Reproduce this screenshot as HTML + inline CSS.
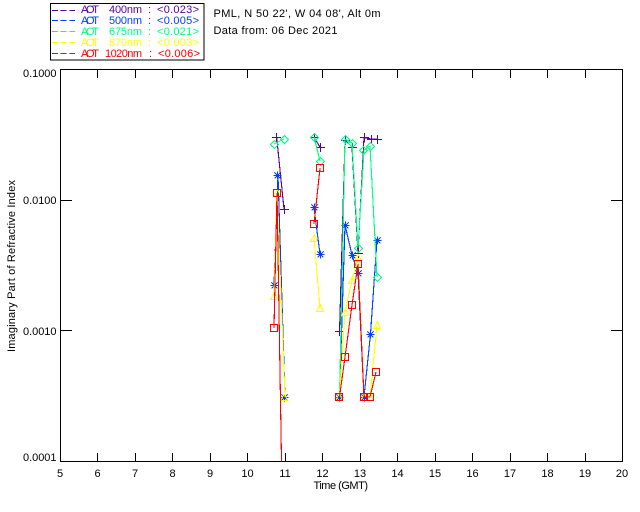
<!DOCTYPE html>
<html><head><meta charset="utf-8"><style>
html,body{margin:0;padding:0;background:#fff}
svg{display:block}
text{font-family:"Liberation Sans",sans-serif;font-size:11px;fill:#000}
.l{fill:none;stroke-width:1.1;shape-rendering:crispEdges}
.m{fill:none;stroke-width:1;shape-rendering:crispEdges}
.m use{shape-rendering:crispEdges}
.a{stroke:#000;stroke-width:1;fill:none;shape-rendering:crispEdges}
</style></head><body>
<svg width="640" height="512" viewBox="0 0 640 512" xmlns="http://www.w3.org/2000/svg">
<defs>
<path id="plus" d="M-4.5 0H4.5M0 -4.5V4.5" shape-rendering="crispEdges"/>
<path id="star" d="M-4 0H4M0 -4V4M-3 -3L3 3M-3 3L3 -3" shape-rendering="crispEdges"/>
<path id="dia" d="M0 -4L4 0L0 4L-4 0Z" shape-rendering="crispEdges"/>
<path id="tri" d="M0 -4L3 3H-4Z" shape-rendering="crispEdges"/>
<path id="sq" d="M-4 -4H3V3H-4Z" shape-rendering="crispEdges"/>
</defs>

<!-- legend -->
<rect class="a" x="50.5" y="3.5" width="153.5" height="56.5"/>
<g stroke-dasharray="6 2.7" class="l">
<path stroke="#5a00a0" d="M52 10.5H75"/>
<path stroke="#0040ff" d="M52 20.5H75"/>
<path stroke="#00ff80" d="M52 31.5H75"/>
<path stroke="#ffff00" d="M52 42.5H75"/>
<path stroke="#ff0000" d="M52 53.5H75"/>
</g>
<g><text x="81" y="13" textLength="18" style="fill:#5a00a0">AOT</text><text x="109" y="13" textLength="33" style="fill:#5a00a0">400nm</text><text x="148" y="13" style="fill:#5a00a0">:</text><text x="157" y="13" textLength="42" style="fill:#5a00a0">&lt;0.023&gt;</text></g>
<g><text x="81" y="24" textLength="18" style="fill:#0040ff">AOT</text><text x="109" y="24" textLength="33" style="fill:#0040ff">500nm</text><text x="148" y="24" style="fill:#0040ff">:</text><text x="157" y="24" textLength="42" style="fill:#0040ff">&lt;0.005&gt;</text></g>
<g><text x="81" y="35" textLength="18" style="fill:#00ff80">AOT</text><text x="109" y="35" textLength="33" style="fill:#00ff80">675nm</text><text x="148" y="35" style="fill:#00ff80">:</text><text x="157" y="35" textLength="42" style="fill:#00ff80">&lt;0.021&gt;</text></g>
<g><text x="81" y="46" textLength="18" style="fill:#ffff00">AOT</text><text x="109" y="46" textLength="33" style="fill:#ffff00">870nm</text><text x="148" y="46" style="fill:#ffff00">:</text><text x="157" y="46" textLength="42" style="fill:#ffff00">&lt;0.003&gt;</text></g>
<g><text x="81" y="57" textLength="18" style="fill:#ff0000">AOT</text><text x="105" y="57" textLength="37" style="fill:#ff0000">1020nm</text><text x="149" y="57" style="fill:#ff0000">:</text><text x="158" y="57" textLength="42" style="fill:#ff0000">&lt;0.006&gt;</text></g>

<text x="213.5" y="17" textLength="167">PML, N 50 22', W 04 08', Alt 0m</text>
<text x="213.5" y="34" textLength="124">Data from: 06 Dec 2021</text>

<!-- axes -->
<rect class="a" x="60.5" y="69.5" width="562" height="392"/>
<path class="a" d="M97.5 70V78M135.5 70V78M172.5 70V78M210.5 70V78M247.5 70V78M285.5 70V78M322.5 70V78M360.5 70V78M397.5 70V78M435.5 70V78M472.5 70V78M510.5 70V78M547.5 70V78M585.5 70V78
M97.5 461V453M135.5 461V453M172.5 461V453M210.5 461V453M247.5 461V453M285.5 461V453M322.5 461V453M360.5 461V453M397.5 461V453M435.5 461V453M472.5 461V453M510.5 461V453M547.5 461V453M585.5 461V453
M61 200.5H72M61 330.5H72M622 200.5H611M622 330.5H611"/>

<text x="23" y="77" textLength="33.5">0.1000</text>
<text x="23" y="204" textLength="33.5">0.0100</text>
<text x="23" y="335" textLength="33.5">0.0010</text>
<text x="23" y="461" textLength="33.5">0.0001</text>

<g text-anchor="middle">
<text x="60" y="477">5</text><text x="97.5" y="477">6</text><text x="135" y="477">7</text><text x="172.5" y="477">8</text><text x="210" y="477">9</text>
<text x="247.5" y="477">10</text><text x="285" y="477">11</text><text x="322.5" y="477">12</text><text x="360" y="477">13</text><text x="397.5" y="477">14</text>
<text x="435" y="477">15</text><text x="472.5" y="477">16</text><text x="510" y="477">17</text><text x="547.5" y="477">18</text><text x="585" y="477">19</text><text x="622" y="477">20</text>
</g>
<text x="313.5" y="489" textLength="54.5">Time (GMT)</text>
<text transform="translate(15 352) rotate(-90)" x="0" y="0" textLength="172">Imaginary Part of Refractive Index</text>

<!-- purple -->
<g stroke="#5a00a0">
<path class="l" d="M276.7 137.5L284 209M314 137.5L320 147M339.5 332L345 140L352 147L358 253L364 137.5L371 139L377 139"/>
<g class="m">
<use href="#plus" x="276.5" y="137.5"/><use href="#plus" x="284.5" y="209.5"/>
<use href="#plus" x="314.5" y="137.5"/><use href="#plus" x="320.5" y="147.5"/>
<use href="#plus" x="339.5" y="331.5"/><use href="#plus" x="345.5" y="140.5"/><use href="#plus" x="352.5" y="147.5"/><use href="#plus" x="358.5" y="253.5"/><use href="#plus" x="364.5" y="137.5"/><use href="#plus" x="371.5" y="139.5"/><use href="#plus" x="377.5" y="139.5"/>
</g></g>

<!-- blue -->
<g stroke="#0040ff">
<path class="l" d="M274 285L278 175L285 397M314 208L320 254M339.5 397L345 225L352 255L358 273L364 397L370.5 334L377 240"/>
<g class="m">
<use href="#star" x="274.5" y="285.5"/><use href="#star" x="277.5" y="175.5"/><use href="#star" x="284.5" y="397.5"/>
<use href="#star" x="314.5" y="207.5"/><use href="#star" x="320.5" y="254.5"/>
<use href="#star" x="339.5" y="397.5"/><use href="#star" x="345.5" y="225.5"/><use href="#star" x="352.5" y="255.5"/><use href="#star" x="358.5" y="273.5"/><use href="#star" x="364.5" y="397.5"/><use href="#star" x="370.5" y="334.5"/><use href="#star" x="377.5" y="240.5"/>
</g></g>

<!-- green -->
<g stroke="#00ff80">
<path class="l" d="M274 144L284 139M314 137L320 161M339.5 397L345 139L352 143L358 248L364 150L370 146L377 277"/>
<g class="m">
<use href="#dia" x="274.5" y="144.5"/><use href="#dia" x="284.5" y="139.5"/>
<use href="#dia" x="314.5" y="137.5"/><use href="#dia" x="320.5" y="161.5"/>
<use href="#dia" x="345.5" y="139.5"/><use href="#dia" x="352.5" y="143.5"/><use href="#dia" x="358.5" y="248.5"/><use href="#dia" x="363.5" y="150.5"/><use href="#dia" x="370.5" y="146.5"/><use href="#dia" x="377.5" y="277.5"/>
</g></g>

<!-- yellow -->
<g stroke="#ffff00">
<path class="l" d="M274 296L277 193L285 397M314 238L320 308M339.5 397L345 312L352 280L358 258L364 397L370 397L377 325"/>
<g class="m">
<use href="#tri" x="274.5" y="296.5"/><use href="#tri" x="277.5" y="193.5"/><use href="#tri" x="284.5" y="397.5"/>
<use href="#tri" x="314.5" y="238.5"/><use href="#tri" x="320.5" y="308.5"/>
<use href="#tri" x="339.5" y="397.5"/><use href="#tri" x="345.5" y="312.5"/><use href="#tri" x="352.5" y="280.5"/><use href="#tri" x="358.5" y="258.5"/><use href="#tri" x="364.5" y="397.5"/><use href="#tri" x="370.5" y="397.5"/><use href="#tri" x="377.5" y="325.5"/>
</g></g>

<!-- red -->
<g stroke="#ff0000">
<path class="l" d="M274 328L277 193L281.5 461M314 224L320 168M339.5 397L345 357L352 305L358 264L364 397L370 397L376 372"/>
<g class="m">
<use href="#sq" x="274.5" y="328.5"/><use href="#sq" x="277.5" y="193.5"/>
<use href="#sq" x="314.5" y="224.5"/><use href="#sq" x="320.5" y="168.5"/>
<use href="#sq" x="339.5" y="397.5"/><use href="#sq" x="345.5" y="357.5"/><use href="#sq" x="352.5" y="305.5"/><use href="#sq" x="358.5" y="264.5"/><use href="#sq" x="364.5" y="397.5"/><use href="#sq" x="370.5" y="397.5"/><use href="#sq" x="376.5" y="372.5"/>
</g></g>
</svg>
</body></html>
